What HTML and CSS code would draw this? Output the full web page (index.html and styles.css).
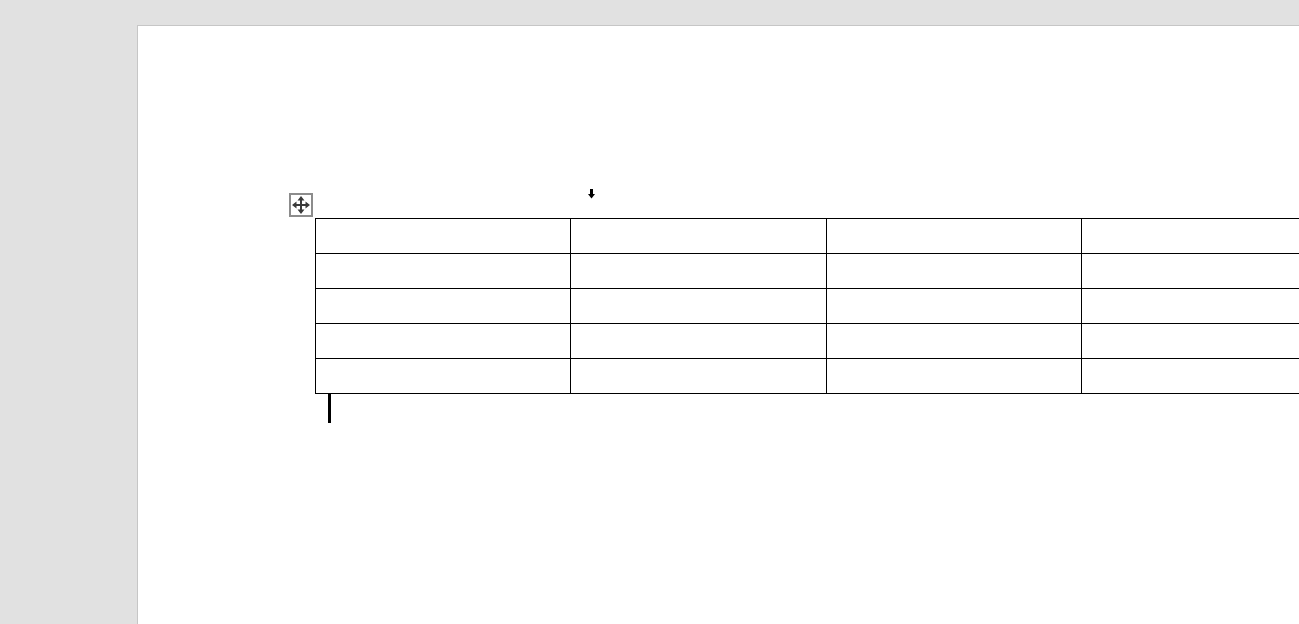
FILE: index.html
```html
<!DOCTYPE html>
<html>
<head>
<meta charset="utf-8">
<link rel="stylesheet" href="styles.css">
</head>
<body>
<div class="page">
  <div class="table-wrap">
    <div class="move-handle">
      <svg width="20" height="20" viewBox="0 0 20 20">
        <path d="M10 3 V17 M3 10 H17" stroke="#3a3a3a" stroke-width="2" fill="none"/>
        <path d="M10 1 L6.5 5.5 H13.5 Z M10 19 L6.5 14.5 H13.5 Z M1 10 L5.5 6.5 V13.5 Z M19 10 L14.5 6.5 V13.5 Z" fill="#3a3a3a"/>
      </svg>
    </div>
    <div class="col-marker">
      <svg width="7" height="10" viewBox="0 0 7 10">
        <rect x="2" y="0" width="3" height="5" fill="#000"/>
        <path d="M0 5 H7 L3.5 9.5 Z" fill="#000"/>
      </svg>
    </div>
    <div class="grid-table" role="table">
      <div class="cell"></div><div class="cell"></div><div class="cell"></div><div class="cell"></div>
      <div class="cell"></div><div class="cell"></div><div class="cell"></div><div class="cell"></div>
      <div class="cell"></div><div class="cell"></div><div class="cell"></div><div class="cell"></div>
      <div class="cell"></div><div class="cell"></div><div class="cell"></div><div class="cell"></div>
      <div class="cell"></div><div class="cell"></div><div class="cell"></div><div class="cell"></div>
    </div>
    <div class="caret"></div>
  </div>
</div>
</body>
</html>
```

FILE: styles.css
```css
html, body {
  margin: 0;
  padding: 0;
  width: 1299px;
  height: 624px;
  overflow: hidden;
  background: #e1e1e1;
  font-family: "Liberation Sans", Arial, sans-serif;
}
.page {
  margin: 25px 0 0 137px;
  width: 1162px;
  height: 599px;
  overflow: hidden;
  background: #ffffff;
  border-left: 1px solid #c6c6c6;
  border-top: 1px solid #c6c6c6;
  padding: 192px 0 0 177px;
  box-sizing: border-box;
}
.table-wrap {
  position: relative;
  width: 1030px;
}
.move-handle {
  position: absolute;
  left: -26px;
  top: -25px;
  width: 20px;
  height: 20px;
  border: 2px solid #8c8c8c;
  background: #fff;
}
.move-handle svg {
  display: block;
}
.col-marker {
  position: absolute;
  left: 273px;
  top: -29px;
  width: 7px;
  height: 10px;
}
.col-marker svg {
  display: block;
}
.grid-table {
  display: grid;
  grid-template-columns: 254px 255px 254px 255px;
  grid-auto-rows: 34px;
  gap: 1px;
  padding: 1px;
  background: #000;
  width: max-content;
}
.cell {
  background: #fff;
}
.caret {
  width: 3px;
  height: 30px;
  margin: -1px 0 0 13px;
  background: #000;
}
```
